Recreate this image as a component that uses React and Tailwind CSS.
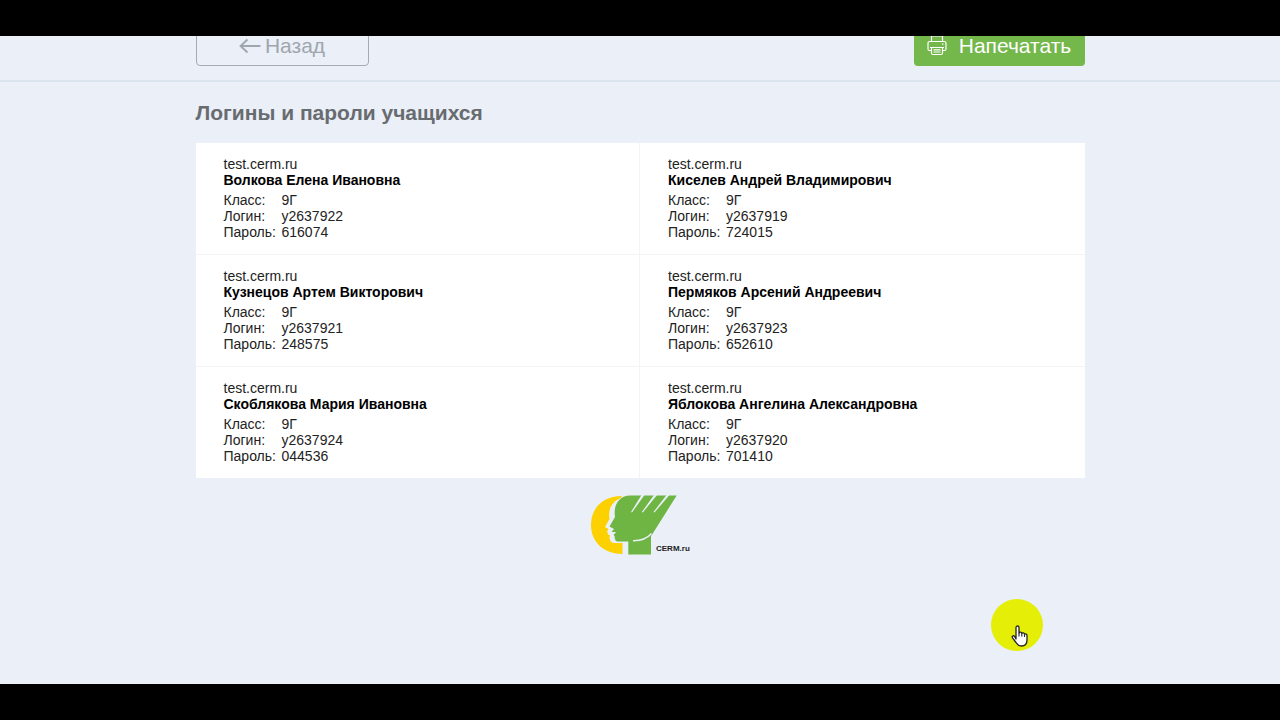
import React from "react";

const students = [
  { name: "Волкова Елена Ивановна", login: "y2637922", password: "616074" },
  { name: "Киселев Андрей Владимирович", login: "y2637919", password: "724015" },
  { name: "Кузнецов Артем Викторович", login: "y2637921", password: "248575" },
  { name: "Пермяков Арсений Андреевич", login: "y2637923", password: "652610" },
  { name: "Скоблякова Мария Ивановна", login: "y2637924", password: "044536" },
  { name: "Яблокова Ангелина Александровна", login: "y2637920", password: "701410" }
];

const ArrowIcon = () => (
  <svg className="w-[22px] h-4" viewBox="0 0 22 16" fill="none" stroke="currentColor" strokeWidth="1.8" aria-hidden="true">
    <path d="M21.5 8H1.5M8.5 1.5L1.5 8L8.500 14.5" />
  </svg>
);

const PrinterIcon = () => (
  <svg className="w-5 h-5" viewBox="0 0 20 20" fill="none" stroke="currentColor" strokeWidth="1.2" aria-hidden="true">
    <path d="M4.5 5.500V0H15.500V5.500" />
    <path d="M4 14.500H2.500Q1 14.500 1 13V7.500Q1 5.500 3 5.500H17Q19 5.500 19 7.500V13Q19 14.500 17.500 14.500H16" />
    <path d="M3 11.500H17M4.500 11.500V17Q4.500 18.500 6 18.500H14Q15.500 18.500 15.500 17V11.500M6.500 13.800H13.500M6.500 16H13.500M15 8.200H16.500" />
  </svg>
);

const Logo = () => (
  <svg className="w-[100px] h-[60px]" viewBox="0 0 100 60" role="img" aria-label="CERM.ru">
    <path
      d="M31.500 1C13 1 1 13 1 30C1 47 14 59 32.500 59V48H25C21.500 48 19.800 46 19.500 43L20 40.500L17.500 39L18.500 37.200H16.500L18.500 34L15 32L19.500 24C18 15 21 7 31.500 2.500Z"
      fill="#fdd000"
    />
    <path
      d="M40 0.500H86.700L64 36.500C63 38.500 62 39.500 61 41V59.500H38.300V46.500H28C25.500 46.500 24.700 44.500 24.700 41.500L23.500 39.500L25.500 38.200V37H21.500L24 34L19.500 31.500L25 22C23 9 30 0.500 40 0.500Z"
      fill="#6fb544"
    />
    <path d="M51.500 0H54.500L42 17.500L41 17ZM64 0H67L52.800 17.500L51.800 17ZM76.500 0H79.500L64.500 17.500L63.500 17Z" fill="#eaeff8" />
    <path d="M43 45.800C52 46 57 43.500 61.500 38.500" fill="none" stroke="#eaeff8" strokeWidth="1.500" />
    <text x="66" y="56" fontFamily="Liberation Sans, sans-serif" fontSize="8" fontWeight="700" fill="#222">
      CERM.ru
    </text>
  </svg>
);

const PointerMark = () => (
  <div className="absolute left-[991px] top-[599px] w-[52px] h-[52px] rounded-full bg-[#e4ee07] pointer-events-none">
    <svg className="absolute left-5 top-[26px] w-[18px] h-[22px]" viewBox="0 0 18 22" aria-hidden="true">
      <path
        d="M5 14V2.500C5 0.500 8 0.500 8 2.500V8C8.500 6.500 10.800 7 10.800 8.500C11.500 7.300 13.500 7.800 13.500 9.300C14.500 8.500 16 9 16 10.500V15C16 18.500 14 21 10.500 21C7.500 21 6.300 19.500 5 17.500L1.500 12.800C0.500 11.200 2.500 10 3.500 11.300Z"
        fill="#fff"
        stroke="#222"
        strokeWidth="1.300"
        strokeLinejoin="round"
      />
      <path d="M8 8V11.500M10.800 8.500V11.500M13.500 9.500V12" stroke="#222" strokeWidth="1.100" />
    </svg>
  </div>
);

const StudentCard = ({ student }) => (
  <article className="pl-7 pt-[13px] pb-[14px] border-r border-b border-[#f3f4f5] even:border-r-0 nth-[n+5]:border-b-0">
    <p>test.cerm.ru</p>
    <h2 className="font-bold text-black">{student.name}</h2>
    <dl className="grid grid-cols-[58px_1fr] mt-1">
      <dt>Класс:</dt>
      <dd>9Г</dd>
      <dt>Логин:</dt>
      <dd>{student.login}</dd>
      <dt>Пароль:</dt>
      <dd>{student.password}</dd>
    </dl>
  </article>
);

const App = () => {
  return (
    <div className="relative min-h-screen flex flex-col bg-black font-['Liberation_Sans',Arial,sans-serif]">
      <div className="h-9" />
      <div className="flex-1 mb-9 bg-[#eaeff8]">
        {/* Toolbar, scrolled partly out of view */}
        <header className="h-[46px] pb-[14px] overflow-hidden flex items-end border-b-2 border-[#d9e4ee]">
          <div className="w-full max-w-[889px] mx-auto flex justify-between">
            <button type="button" className="w-[173px] h-10 flex items-center justify-center gap-1 border border-[#a5abb3] rounded text-[21px] leading-5 text-[#a0a6ad]">
              <ArrowIcon />
              Назад
            </button>
            <button type="button" className="w-[171px] h-10 flex items-center justify-center gap-3 rounded bg-[#74b74a] text-[21px] leading-5 text-white">
              <PrinterIcon />
              Напечатать
            </button>
          </div>
        </header>

        <main className="w-full max-w-[889px] mx-auto pt-[17px]">
          <h1 className="text-[21px] leading-7 font-bold text-[#686b6f]">Логины и пароли учащихся</h1>
          <div className="mt-4 grid grid-cols-2 bg-white text-sm leading-4 text-[#222]">
            {students.map((student) => (
              <StudentCard key={student.login} student={student} />
            ))}
          </div>
        </main>

        <footer className="mt-[17px] flex justify-center">
          <Logo />
        </footer>
      </div>
      <PointerMark />
    </div>
  );
};

export default App;
